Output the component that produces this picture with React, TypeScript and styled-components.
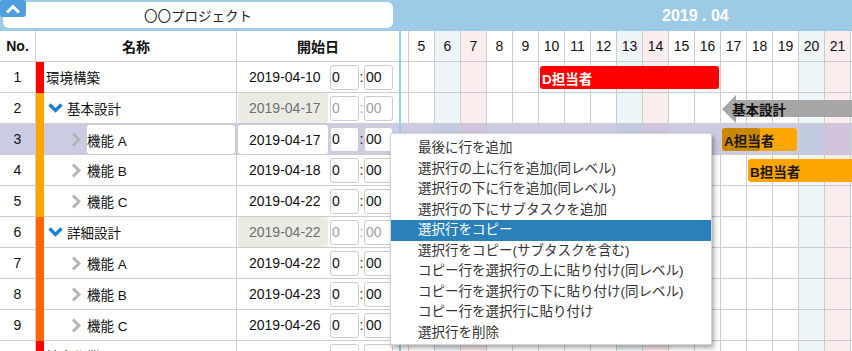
import { FC } from "react";
import styled, { createGlobalStyle, css } from "styled-components";

type Kind = "task" | "parent" | "child";

interface GanttBar {
    from: number;
    to: number;
    label: string;
    type: "bar" | "summary";
    color?: string;
    textColor?: string;
    progress?: number;
}

interface TaskRow {
    no: number;
    name: string;
    kind: Kind;
    color: string;
    date: string;
    selected?: boolean;
    bar?: GanttBar;
}

const FIRST_DAY = 4;
const DAY_W = 26;
const LAST_DAY = 22;

const tasks: TaskRow[] = [
    { no: 1, name: "環境構築", kind: "task", color: "#ff0000", date: "2019-04-10", bar: { from: 10, to: 16, label: "D担当者", type: "bar", color: "#ff0000", textColor: "#fff" } },
    { no: 2, name: "基本設計", kind: "parent", color: "#ffa500", date: "2019-04-17", bar: { from: 17, to: 22, label: "基本設計", type: "summary" } },
    { no: 3, name: "機能 A", kind: "child", color: "#ffa500", date: "2019-04-17", selected: true, bar: { from: 17, to: 19, label: "A担当者", type: "bar", color: "#ffa500", textColor: "#1a1a1a", progress: 38 } },
    { no: 4, name: "機能 B", kind: "child", color: "#ffa500", date: "2019-04-18", bar: { from: 18, to: 22, label: "B担当者", type: "bar", color: "#ffa500", textColor: "#1a1a1a" } },
    { no: 5, name: "機能 C", kind: "child", color: "#ffa500", date: "2019-04-22" },
    { no: 6, name: "詳細設計", kind: "parent", color: "#ff6600", date: "2019-04-22" },
    { no: 7, name: "機能 A", kind: "child", color: "#ff6600", date: "2019-04-22" },
    { no: 8, name: "機能 B", kind: "child", color: "#ff6600", date: "2019-04-23" },
    { no: 9, name: "機能 C", kind: "child", color: "#ff6600", date: "2019-04-26" },
    { no: 10, name: "結合作業", kind: "task", color: "#ff0000", date: "" },
];

const menuItems = [
    "最後に行を追加",
    "選択行の上に行を追加(同レベル)",
    "選択行の下に行を追加(同レベル)",
    "選択行の下にサブタスクを追加",
    "選択行をコピー",
    "選択行をコピー(サブタスクを含む)",
    "コピー行を選択行の上に貼り付け(同レベル)",
    "コピー行を選択行の下に貼り付け(同レベル)",
    "コピー行を選択行に貼り付け",
    "選択行を削除",
];

const days = Array.from({ length: LAST_DAY - FIRST_DAY + 1 }, (_, i) => FIRST_DAY + i);
const dayOfWeek = (d: number) => new Date(2019, 3, d).getDay();

const GlobalStyle = createGlobalStyle`
    html, body {
        margin: 0;
        padding: 0;
        background: #ffffff;
        overflow: hidden;
    }
    body {
        font-family: "Liberation Sans", "Noto Sans CJK JP", sans-serif;
        font-size: 14px;
        color: #111111;
    }
    * {
        box-sizing: border-box;
    }
`;

const StyledPage = styled.div`
    position: relative;
    display: flex;
    width: 852px;
    height: 351px;
    overflow: hidden;
`;

const StyledLeftPanel = styled.div`
    width: 399px;
    flex-shrink: 0;
    display: flex;
    flex-direction: column;
    overflow: hidden;
`;

const StyledDivider = styled.div`
    width: 2px;
    flex-shrink: 0;
    background: #9dcbe6;
`;

const StyledGanttPanel = styled.div`
    flex: 1;
    display: flex;
    flex-direction: column;
    overflow: hidden;
`;

const StyledTitleBar = styled.div`
    position: relative;
    height: 31px;
    flex-shrink: 0;
    background: #9dcbe6;
    padding: 2px 6px 3px 3px;
`;

const StyledProjectName = styled.div`
    height: 100%;
    background: #ffffff;
    border-radius: 6px;
    display: flex;
    align-items: center;
    justify-content: center;
    font-size: 13.5px;
    color: #222222;
`;

const StyledCollapseButton = styled.button`
    position: absolute;
    top: 0;
    left: 0;
    width: 26px;
    height: 17px;
    padding: 0;
    border: none;
    border-radius: 3px;
    background: #4f9fdc;
    display: flex;
    align-items: center;
    justify-content: center;
`;

const StyledRow = styled.div<{ $selected?: boolean }>`
    display: grid;
    grid-template-columns: 36px 201px 1fr;
    height: 31px;
    flex-shrink: 0;
    background: ${(p) => (p.$selected ? "#cbcbe4" : "#ffffff")};
`;

const StyledHeadCell = styled.div`
    display: flex;
    align-items: center;
    justify-content: center;
    font-weight: bold;
    font-size: 14px;
    border-bottom: 1px solid #cccccc;
    &:not(:last-child) {
        border-right: 1px solid #cccccc;
    }
`;

const StyledNoCell = styled.div`
    display: flex;
    align-items: center;
    justify-content: center;
    font-size: 14px;
    border-right: 1px solid #cccccc;
    border-bottom: 1px solid #cccccc;
`;

const StyledNameCell = styled.div`
    display: flex;
    border-right: 1px solid #cccccc;
`;

const StyledColorBar = styled.div<{ $color: string }>`
    width: 8px;
    flex-shrink: 0;
    background: ${(p) => p.$color};
`;

const StyledNameBody = styled.div<{ $kind: Kind }>`
    flex: 1;
    display: flex;
    align-items: center;
    border-bottom: 1px solid #cccccc;
    padding-left: ${(p) => (p.$kind === "task" ? 2 : p.$kind === "parent" ? 4 : 27)}px;
    column-gap: ${(p) => (p.$kind === "parent" ? 4 : 6)}px;
`;

const StyledNameText = styled.span<{ $editing?: boolean }>`
    flex: 1;
    align-self: stretch;
    display: flex;
    align-items: center;
    font-size: 13.5px;
    white-space: nowrap;
    ${(p) =>
        p.$editing &&
        css`
            background: #ffffff;
            border-radius: 3px;
            margin: 1px 1px 0 0;
        `}
`;

const StyledDateCell = styled.div`
    display: flex;
    align-items: center;
    border-bottom: 1px solid #cccccc;
`;

const StyledDateBox = styled.div<{ $state: "plain" | "disabled" | "editing" }>`
    width: 90px;
    margin-left: 1px;
    align-self: stretch;
    display: flex;
    align-items: center;
    padding-left: 11px;
    font-size: 14px;
    border-radius: 3px;
    ${(p) =>
        p.$state === "disabled" &&
        css`
            background: #ebebe4;
            color: #6f6f6f;
        `}
    ${(p) =>
        p.$state === "editing" &&
        css`
            background: #ffffff;
            margin-top: 1px;
        `}
`;

const StyledTimeBox = styled.div<{ $disabled?: boolean; $pad: number }>`
    width: 29px;
    height: 25px;
    flex-shrink: 0;
    border: 1px solid #cccccc;
    border-radius: 3px;
    background: #ffffff;
    display: flex;
    align-items: center;
    padding-left: ${(p) => p.$pad}px;
    font-size: 14px;
    color: ${(p) => (p.$disabled ? "#a0a0a0" : "#111111")};
`;

const StyledColon = styled.span<{ $disabled?: boolean }>`
    width: 5px;
    text-align: center;
    font-size: 14px;
    color: ${(p) => (p.$disabled ? "#a0a0a0" : "#111111")};
`;

const StyledMonthBar = styled.div`
    height: 31px;
    flex-shrink: 0;
    background: #9dcbe6;
    color: #ffffff;
    font-weight: bold;
    font-size: 16px;
    display: flex;
    align-items: center;
    padding-left: 261px;
    white-space: nowrap;
`;

const StyledTrack = styled.div`
    margin-left: -${FIRST_DAY * 0 + 19}px;
    display: flex;
    flex-direction: column;
`;

const StyledGanttRow = styled.div`
    position: relative;
    display: flex;
    height: 31px;
    flex-shrink: 0;
`;

const tintFor = (dow: number, selected?: boolean) => {
    if (dow === 6) return selected ? "#c3cbe2" : "#edf5f9";
    if (dow === 0) return selected ? "#d0c5dc" : "#fbeced";
    return selected ? "#cbcbe4" : "#ffffff";
};

const StyledDayCell = styled.div<{ $bg: string }>`
    width: ${DAY_W}px;
    flex-shrink: 0;
    border-left: 1px solid #cccccc;
    border-bottom: 1px solid #cccccc;
    background: ${(p) => p.$bg};
    display: flex;
    align-items: center;
    justify-content: center;
    font-size: 14px;
`;

const StyledBar = styled.div<{ $color: string; $text: string }>`
    position: absolute;
    top: 4px;
    height: 23px;
    z-index: 1;
    border-radius: 3px;
    background: ${(p) => p.$color};
    color: ${(p) => p.$text};
    font-weight: bold;
    font-size: 13.5px;
    display: flex;
    align-items: center;
    padding-left: 2px;
    white-space: nowrap;
    overflow: hidden;
`;

const StyledProgress = styled.div`
    position: absolute;
    left: 0;
    top: 0;
    bottom: 0;
    background: #c98800;
    border-radius: 3px;
`;

const StyledBarLabel = styled.span`
    position: relative;
`;

const StyledSummary = styled.div`
    position: absolute;
    top: 2px;
    height: 28px;
    z-index: 1;
    display: flex;
    align-items: center;
    padding-left: 10px;
    font-weight: bold;
    font-size: 13.5px;
    color: #111111;
    white-space: nowrap;

    &::before {
        content: "";
        position: absolute;
        inset: 0;
        background: #a6a6a6;
        clip-path: polygon(0 50%, 14px 0, 14px 5px, 100% 5px, 100% 22px, 14px 22px, 14px 100%);
    }
`;

const StyledMenu = styled.ul`
    position: absolute;
    left: 390px;
    top: 133px;
    width: 322px;
    margin: 0;
    padding: 4px 0 1px;
    list-style: none;
    background: #ffffff;
    border: 1px solid #d5d5d5;
    border-radius: 2px;
    box-shadow: 2px 3px 5px rgba(0, 0, 0, 0.35);
    z-index: 10;
    font-size: 13.5px;
`;

const StyledMenuItem = styled.li<{ $active?: boolean }>`
    height: 20.5px;
    line-height: 20.5px;
    padding-left: 27px;
    white-space: nowrap;
    color: ${(p) => (p.$active ? "#ffffff" : "#333333")};
    background: ${(p) => (p.$active ? "#2a80b9" : "transparent")};
`;

const ChevronUp = () => (
    <svg width="16" height="10" viewBox="0 0 16 10">
        <path d="M2 8.5 L8 2.5 L14 8.5" stroke="#fff" strokeWidth="3" fill="none" />
    </svg>
);

const ChevronDown = () => (
    <svg width="15" height="10" viewBox="0 0 15 10" style={{ flexShrink: 0 }}>
        <path d="M1.5 1.5 L7.5 7.5 L13.5 1.5" stroke="#1a7fd0" strokeWidth="3.2" fill="none" />
    </svg>
);

const ChevronRight = () => (
    <svg width="10" height="15" viewBox="0 0 10 15" style={{ flexShrink: 0 }}>
        <path d="M2 1.5 L8 7.5 L2 13.5" stroke="#b3b3b3" strokeWidth="3" fill="none" />
    </svg>
);

const barLeft = (d: number) => (d - FIRST_DAY) * DAY_W + 2;
const barWidth = (from: number, to: number) => (to - from + 1) * DAY_W - 3;

const GanttBarView: FC<{ bar: GanttBar }> = ({ bar }) => {
    const left = barLeft(bar.from);
    const width = barWidth(bar.from, bar.to);
    if (bar.type === "summary") {
        return (
            <StyledSummary style={{ left, width }}>
                <StyledBarLabel>{bar.label}</StyledBarLabel>
            </StyledSummary>
        );
    }
    return (
        <StyledBar $color={bar.color ?? "#ffa500"} $text={bar.textColor ?? "#111"} style={{ left, width }}>
            {bar.progress && <StyledProgress style={{ width: bar.progress }} />}
            <StyledBarLabel>{bar.label}</StyledBarLabel>
        </StyledBar>
    );
};

const TaskTableRow: FC<{ task: TaskRow }> = ({ task }) => {
    const disabled = task.kind === "parent";
    const dateState = disabled ? "disabled" : task.selected ? "editing" : "plain";
    return (
        <StyledRow $selected={task.selected}>
            <StyledNoCell>{task.no}</StyledNoCell>
            <StyledNameCell>
                <StyledColorBar $color={task.color} />
                <StyledNameBody $kind={task.kind}>
                    {task.kind === "parent" && <ChevronDown />}
                    {task.kind === "child" && <ChevronRight />}
                    <StyledNameText $editing={task.selected}>{task.name}</StyledNameText>
                </StyledNameBody>
            </StyledNameCell>
            <StyledDateCell>
                <StyledDateBox $state={dateState}>{task.date}</StyledDateBox>
                <StyledTimeBox $disabled={disabled} $pad={1} style={{ marginLeft: 2 }}>
                    0
                </StyledTimeBox>
                <StyledColon $disabled={disabled}>:</StyledColon>
                <StyledTimeBox $disabled={disabled} $pad={1}>
                    00
                </StyledTimeBox>
            </StyledDateCell>
        </StyledRow>
    );
};

const App: FC = () => {
    return (
        <>
            <GlobalStyle />
            <StyledPage>
                <StyledLeftPanel>
                    <StyledTitleBar>
                        <StyledProjectName>〇〇プロジェクト</StyledProjectName>
                        <StyledCollapseButton type="button" title="折りたたむ">
                            <ChevronUp />
                        </StyledCollapseButton>
                    </StyledTitleBar>
                    <StyledRow>
                        <StyledHeadCell>No.</StyledHeadCell>
                        <StyledHeadCell>名称</StyledHeadCell>
                        <StyledHeadCell>開始日</StyledHeadCell>
                    </StyledRow>
                    {tasks.map((task) => (
                        <TaskTableRow key={task.no} task={task} />
                    ))}
                </StyledLeftPanel>
                <StyledDivider />
                <StyledGanttPanel>
                    <StyledMonthBar>2019 . 04</StyledMonthBar>
                    <StyledTrack>
                        <StyledGanttRow>
                            {days.map((d) => (
                                <StyledDayCell key={d} $bg={tintFor(dayOfWeek(d))}>
                                    {d}
                                </StyledDayCell>
                            ))}
                        </StyledGanttRow>
                        {tasks.map((task) => (
                            <StyledGanttRow key={task.no}>
                                {days.map((d) => (
                                    <StyledDayCell key={d} $bg={tintFor(dayOfWeek(d), task.selected)} />
                                ))}
                                {task.bar && <GanttBarView bar={task.bar} />}
                            </StyledGanttRow>
                        ))}
                    </StyledTrack>
                </StyledGanttPanel>
                <StyledMenu>
                    {menuItems.map((item, i) => (
                        <StyledMenuItem key={item} $active={i === 4}>
                            {item}
                        </StyledMenuItem>
                    ))}
                </StyledMenu>
            </StyledPage>
        </>
    );
};

export default App;
